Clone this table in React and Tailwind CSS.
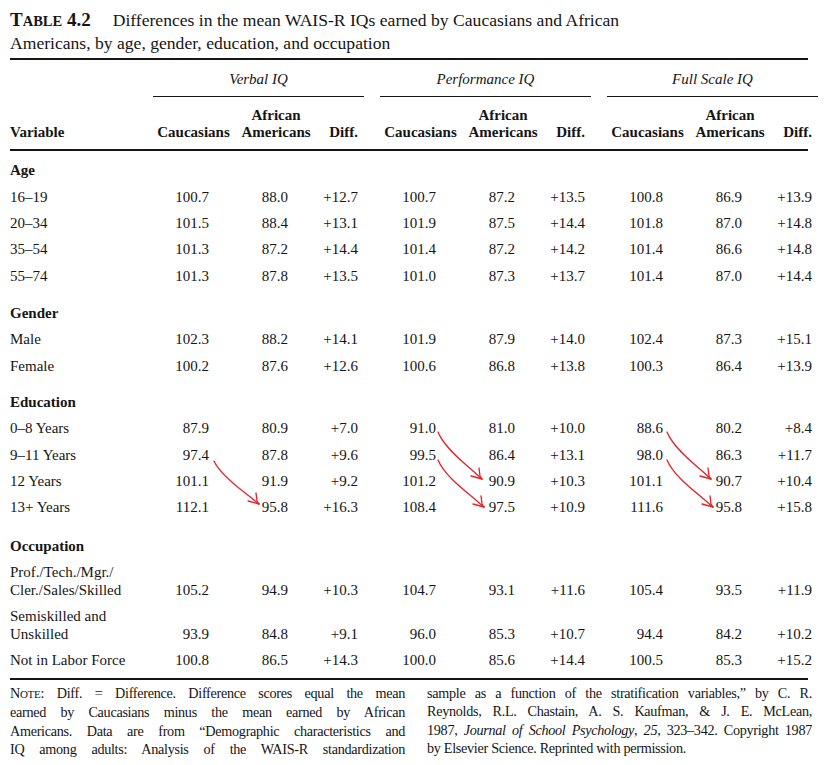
import React from "react";

const G =
  "grid grid-cols-[143px_81px_84px_46px_16px_81px_84px_46px_16px_81px_84px_46px]";

const sections = [
  {
    title: "Age",
    mt: "",
    rows: [
      [["16–19"], "100.7", "88.0", "+12.7", "100.7", "87.2", "+13.5", "100.8", "86.9", "+13.9"],
      [["20–34"], "101.5", "88.4", "+13.1", "101.9", "87.5", "+14.4", "101.8", "87.0", "+14.8"],
      [["35–54"], "101.3", "87.2", "+14.4", "101.4", "87.2", "+14.2", "101.4", "86.6", "+14.8"],
      [["55–74"], "101.3", "87.8", "+13.5", "101.0", "87.3", "+13.7", "101.4", "87.0", "+14.4"],
    ],
  },
  {
    title: "Gender",
    mt: "mt-[11px]",
    rows: [
      [["Male"], "102.3", "88.2", "+14.1", "101.9", "87.9", "+14.0", "102.4", "87.3", "+15.1"],
      [["Female"], "100.2", "87.6", "+12.6", "100.6", "86.8", "+13.8", "100.3", "86.4", "+13.9"],
    ],
  },
  {
    title: "Education",
    mt: "mt-[10px]",
    rows: [
      [["0–8 Years"], "87.9", "80.9", "+7.0", "91.0", "81.0", "+10.0", "88.6", "80.2", "+8.4"],
      [["9–11 Years"], "97.4", "87.8", "+9.6", "99.5", "86.4", "+13.1", "98.0", "86.3", "+11.7"],
      [["12 Years"], "101.1", "91.9", "+9.2", "101.2", "90.9", "+10.3", "101.1", "90.7", "+10.4"],
      [["13+ Years"], "112.1", "95.8", "+16.3", "108.4", "97.5", "+10.9", "111.6", "95.8", "+15.8"],
    ],
  },
  {
    title: "Occupation",
    mt: "mt-[12px]",
    rows: [
      [["Prof./Tech./Mgr./", "Cler./Sales/Skilled"], "105.2", "94.9", "+10.3", "104.7", "93.1", "+11.6", "105.4", "93.5", "+11.9"],
      [["Semiskilled and", "Unskilled"], "93.9", "84.8", "+9.1", "96.0", "85.3", "+10.7", "94.4", "84.2", "+10.2"],
      [["Not in Labor Force"], "100.8", "86.5", "+14.3", "100.0", "85.6", "+14.4", "100.5", "85.3", "+15.2"],
    ],
  },
];

const padCls = ["pr-[25px]", "pr-[30px]", "pr-[6px]"];

function DataRow({ row }) {
  const [label, ...vals] = row;
  const two = label.length > 1;
  const cellBase = two
    ? "flex items-end justify-end pb-[4px] leading-[18px]"
    : "flex items-center justify-end";
  const cells = [];
  vals.forEach((v, i) => {
    if (i === 3 || i === 6) cells.push(<div key={"s" + i} />);
    cells.push(
      <div key={i} className={`${cellBase} ${padCls[i % 3]}`}>
        {v}
      </div>
    );
  });
  return (
    <div className={`${G} ${two ? "h-[44px]" : "h-[26.33px]"}`}>
      <div
        className={
          two
            ? "flex flex-col justify-center leading-[18px] py-[4px]"
            : "flex items-center"
        }
      >
        {label.map((l) => (
          <div key={l}>{l}</div>
        ))}
      </div>
      {cells}
    </div>
  );
}

function Arrow({ x1, y1, x2, y2 }) {
  const dx = x2 - x1;
  const dy = y2 - y1;
  const d = `M${x1} ${y1} C ${x1 + dx * 0.12} ${y1 + dy * 0.28}, ${x1 + dx * 0.45} ${
    y1 + dy * 0.55
  }, ${x1 + dx * 0.7} ${y1 + dy * 0.75} S ${x2 - 3} ${y2 - 2}, ${x2} ${y2}`;
  return (
    <g fill="none" stroke="#e8202a" strokeWidth="1.3" strokeLinecap="round" strokeLinejoin="round">
      <path d={d} />
      <path d={`M${x2 - 3} ${y2 - 11} L${x2 - 2} ${y2 - 3} L${x2} ${y2}`} />
      <path d={`M${x2 - 11} ${y2 - 3} L${x2} ${y2}`} />
    </g>
  );
}

export default function App() {
  return (
    <div className="relative w-[830px] h-[765px] bg-white text-[#151515] font-['Liberation_Serif','Times_New_Roman',serif] overflow-hidden">
      <div className="px-[10px] pt-[9px] w-[818px]">
        {/* Title */}
        <div className="text-[17.6px]">
          <div className="h-[23px] leading-[23px] whitespace-nowrap">
            <span className="font-bold leading-none">
              <span className="text-[19px]">T</span>
              <span className="text-[14.5px]">ABLE</span>
              <span className="text-[19px]"> 4.2</span>
            </span>
            <span className="ml-[22px]">
              Differences in the mean WAIS-R IQs earned by Caucasians and African
            </span>
          </div>
          <div className="h-[23px] leading-[23px]">
            Americans, by age, gender, education, and occupation
          </div>
        </div>

        <div className="mt-[3px] h-[1.5px] bg-[#151515]" />

        {/* Group headers */}
        <div className="text-[15px]">
          <div className="grid grid-cols-[143px_211px_16px_211px_16px_211px]">
            <div />
            <div className="pt-[9px]">
              <div className="italic text-center leading-[20px]">Verbal IQ</div>
              <div className="mt-[7px] h-[1.5px] bg-[#151515]" />
            </div>
            <div />
            <div className="pt-[9px]">
              <div className="italic text-center leading-[20px]">Performance IQ</div>
              <div className="mt-[7px] h-[1.5px] bg-[#151515]" />
            </div>
            <div />
            <div className="pt-[9px]">
              <div className="italic text-center leading-[20px]">Full Scale IQ</div>
              <div className="mt-[7px] h-[1.5px] bg-[#151515]" />
            </div>
          </div>

          {/* Column headers */}
          <div className={`${G} font-bold leading-[17px] pt-[10px] pb-[8px]`}>
            <div className="self-end">Variable</div>
            {[0, 1, 2].map((g) => (
              <React.Fragment key={g}>
                {g > 0 && <div />}
                <div className="self-end text-center">Caucasians</div>
                <div className="self-end text-center">
                  African
                  <br />
                  Americans
                </div>
                <div className="self-end text-right pr-[6px]">Diff.</div>
              </React.Fragment>
            ))}
          </div>

          <div className="h-[1.5px] bg-[#151515]" />

          {/* Body */}
          <div className="pt-[7px] pb-[5px]">
            {sections.map((s) => (
              <div key={s.title} className={s.mt}>
                <div className="h-[26.33px] flex items-center font-bold">{s.title}</div>
                {s.rows.map((r, i) => (
                  <DataRow key={i} row={r} />
                ))}
              </div>
            ))}
          </div>

          <div className="h-[1.5px] bg-[#151515]" />
        </div>

        {/* Note */}
        <div className="grid grid-cols-[395px_385px] gap-x-[22px] pt-[4px] text-[14.2px] leading-[18.3px] tracking-[-0.3px]">
          <div>
            <div className="text-justify [text-align-last:justify]">
              N<span className="text-[11px]">OTE</span>: Diff. = Difference. Difference scores equal the mean
            </div>
            <div className="text-justify [text-align-last:justify]">
              earned by Caucasians minus the mean earned by African
            </div>
            <div className="text-justify [text-align-last:justify]">
              Americans. Data are from “Demographic characteristics and
            </div>
            <div className="text-justify [text-align-last:justify]">
              IQ among adults: Analysis of the WAIS-R standardization
            </div>
          </div>
          <div>
            <div className="text-justify [text-align-last:justify]">
              sample as a function of the stratification variables,” by C. R.
            </div>
            <div className="text-justify [text-align-last:justify]">
              Reynolds, R.L. Chastain, A. S. Kaufman, &amp; J. E. McLean,
            </div>
            <div className="text-justify [text-align-last:justify]">
              1987, <span className="italic">Journal of School Psychology</span>, <span className="italic">25</span>, 323–342. Copyright 1987
            </div>
            <div>by Elsevier Science. Reprinted with permission.</div>
          </div>
        </div>
      </div>

      {/* Hand-drawn annotation arrows */}
      <svg
        className="absolute left-0 top-0 pointer-events-none"
        width="830"
        height="765"
        viewBox="0 0 830 765"
      >
        <Arrow x1={214} y1={461} x2={259} y2={504} />
        <Arrow x1={438} y1={432} x2={482} y2={479} />
        <Arrow x1={438} y1={460} x2={484} y2={507} />
        <Arrow x1={667} y1={432} x2={711} y2={479} />
        <Arrow x1={667} y1={460} x2={713} y2={507} />
      </svg>
    </div>
  );
}
